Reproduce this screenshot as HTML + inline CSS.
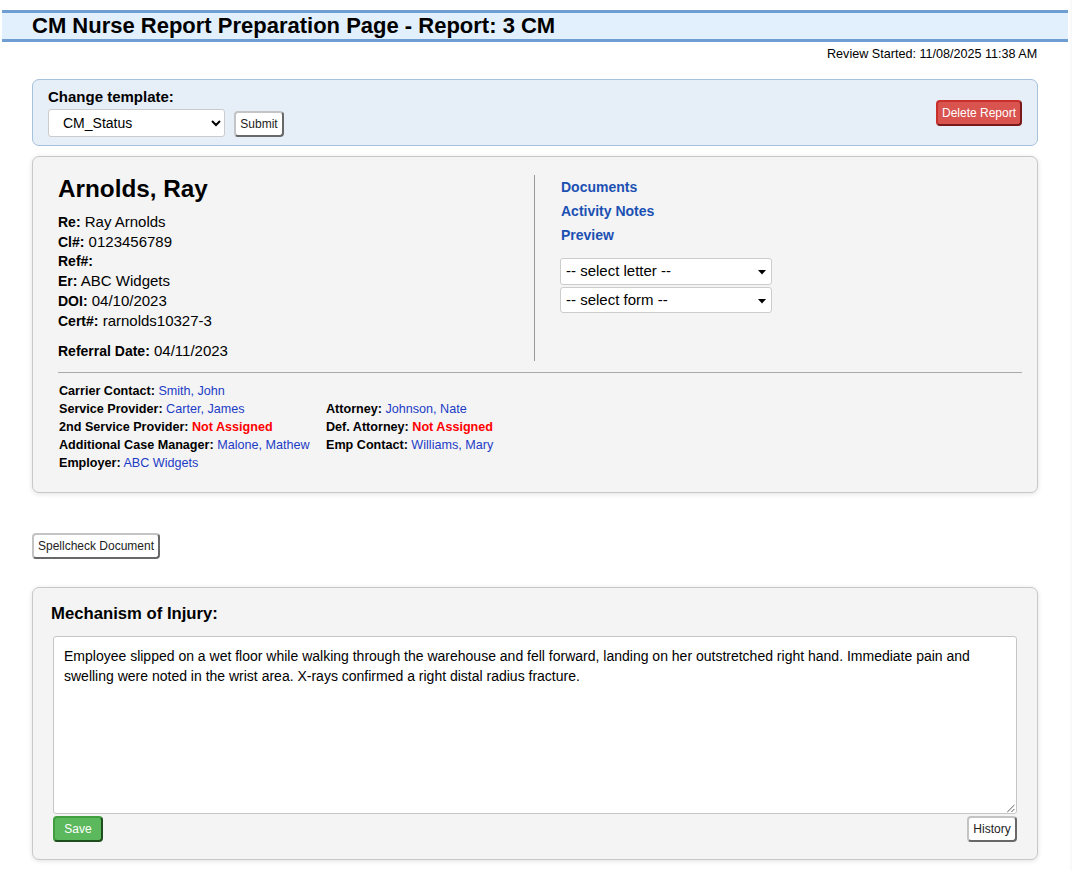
<!DOCTYPE html>
<html><head><meta charset="utf-8">
<style>
*{box-sizing:border-box}
html,body{margin:0;padding:0;background:#fff}
body{font-family:"Liberation Sans",sans-serif;color:#000;width:1072px;height:871px;overflow:hidden;position:relative}
.abs{position:absolute;white-space:nowrap}
.hdr{left:2px;top:10px;width:1066px;height:32px;background:#e2effc;border-top:3px solid #6f9fd2;border-bottom:3px solid #6f9fd2}
.hdr h1{margin:0;position:absolute;left:30px;top:-0.5px;font-size:22px;font-weight:bold;white-space:nowrap}
.rev{left:827px;top:47px;font-size:12.6px}
.tbox{left:32px;top:79px;width:1006px;height:67px;background:#e6eef7;border:1px solid #a5c1dc;border-radius:7px}
.btn{position:absolute;background:#fff;border:2px solid;border-color:#c4c4c4 #686868 #686868 #c4c4c4;border-radius:4px;font-size:12px;font-family:"Liberation Sans",sans-serif;text-align:center;color:#222;white-space:nowrap}
.sel{position:absolute;background:#fff;border:1px solid #ccc;border-radius:3px;font-size:14px;white-space:nowrap}
.pbox{left:32px;top:156px;width:1006px;height:337px;background:#f4f4f4;border:1px solid #c8c8c8;border-radius:7px;box-shadow:0 1px 5px rgba(0,0,0,.12)}
.mbox{left:32px;top:587px;width:1006px;height:273px;background:#f4f4f4;border:1px solid #c8c8c8;border-radius:7px;box-shadow:0 1px 5px rgba(0,0,0,.12)}
.lk{position:absolute;left:528px;color:#1b50b3;font-weight:bold;font-size:14px;white-space:nowrap}
.inf{position:absolute;left:25px;font-size:15px;white-space:nowrap}
.inf b{font-weight:bold;font-size:14px}
.ct{position:absolute;font-size:12.6px;white-space:nowrap}
.bl{color:#1c3cc6}
.rd{color:#ff0000;font-weight:bold}
</style></head><body>
<div class="abs hdr"><h1>CM Nurse Report Preparation Page - Report: 3 CM</h1></div>
<div class="abs" style="left:1070px;top:0;width:2px;height:871px;background:#f9f9f9"></div>
<div class="abs rev">Review Started: 11/08/2025 11:38 AM</div>

<div class="abs tbox">
  <div class="abs" style="left:15px;top:8px;font-size:15px;font-weight:bold">Change template:</div>
  <div class="sel" style="left:15px;top:29px;width:177px;height:28px;padding:5px 0 0 14px">CM_Status
    <svg style="position:absolute;left:162px;top:10px" width="11" height="7" viewBox="0 0 11 7"><path d="M1 1 L5 5 L9 1" fill="none" stroke="#000" stroke-width="2"/></svg>
  </div>
  <div class="btn" style="left:201px;top:31px;width:50px;height:26px;line-height:22px">Submit</div>
  <div class="abs" style="left:903px;top:20px;width:86px;height:26px;background:#d9534f;border:2px solid;border-color:#c9302c #7a1a1a #7a1a1a #c9302c;border-radius:4px;color:#fff;font-size:12px;text-align:center;line-height:22px">Delete Report</div>
</div>

<div class="abs pbox">
  <div class="abs" style="left:25px;top:18px;font-size:24.3px;font-weight:bold">Arnolds, Ray</div>
  <div class="inf" style="top:56px"><b>Re:</b> Ray Arnolds</div>
  <div class="inf" style="top:76px"><b>Cl#:</b> 0123456789</div>
  <div class="inf" style="top:95px"><b>Ref#:</b></div>
  <div class="inf" style="top:115px"><b>Er:</b> ABC Widgets</div>
  <div class="inf" style="top:135px"><b>DOI:</b> 04/10/2023</div>
  <div class="inf" style="top:155px"><b>Cert#:</b> rarnolds10327-3</div>
  <div class="inf" style="top:185px"><b>Referral Date:</b> 04/11/2023</div>
  <div class="abs" style="left:501px;top:18px;width:1px;height:186px;background:#999"></div>
  <div class="lk" style="top:22px">Documents</div>
  <div class="lk" style="top:46px">Activity Notes</div>
  <div class="lk" style="top:70px">Preview</div>
  <div class="sel" style="left:527px;top:101px;width:212px;height:27px;padding:3px 0 0 5px;font-size:15px">-- select letter --
    <svg style="position:absolute;left:197px;top:11px" width="8" height="5" viewBox="0 0 8 5"><path d="M0 0 L8 0 L4 4.5 Z" fill="#000"/></svg>
  </div>
  <div class="sel" style="left:527px;top:130px;width:212px;height:26px;padding:3px 0 0 5px;font-size:15px">-- select form --
    <svg style="position:absolute;left:197px;top:11px" width="8" height="5" viewBox="0 0 8 5"><path d="M0 0 L8 0 L4 4.5 Z" fill="#000"/></svg>
  </div>
  <div class="abs" style="left:25px;top:215px;width:964px;height:1px;background:#aaa"></div>
  <div class="ct" style="left:26px;top:227px"><b>Carrier Contact:</b> <span class="bl">Smith, John</span></div>
  <div class="ct" style="left:26px;top:245px"><b>Service Provider:</b> <span class="bl">Carter, James</span></div>
  <div class="ct" style="left:26px;top:263px"><b>2nd Service Provider:</b> <span class="rd">Not Assigned</span></div>
  <div class="ct" style="left:26px;top:281px"><b>Additional Case Manager:</b> <span class="bl">Malone, Mathew</span></div>
  <div class="ct" style="left:26px;top:299px"><b>Employer:</b> <span class="bl">ABC Widgets</span></div>
  <div class="ct" style="left:293px;top:245px"><b>Attorney:</b> <span class="bl">Johnson, Nate</span></div>
  <div class="ct" style="left:293px;top:263px"><b>Def. Attorney:</b> <span class="rd">Not Assigned</span></div>
  <div class="ct" style="left:293px;top:281px"><b>Emp Contact:</b> <span class="bl">Williams, Mary</span></div>
</div>

<div class="btn" style="left:32px;top:533px;width:128px;height:26px;line-height:22px">Spellcheck Document</div>

<div class="abs mbox">
  <div class="abs" style="left:18px;top:16px;font-size:16.7px;font-weight:bold">Mechanism of Injury:</div>
  <div class="abs" style="left:20px;top:48px;width:964px;height:178px;background:#fff;border:1px solid #c6c6c6;border-radius:3px;white-space:normal;padding:9px 10px;font-size:14px;line-height:20px">Employee slipped on a wet floor while walking through the warehouse and fell forward, landing on her outstretched right hand. Immediate pain and swelling were noted in the wrist area. X-rays confirmed a right distal radius fracture.
      </div>
  <div class="abs" style="left:20px;top:228px;width:50px;height:26px;background:#5cb85c;border:2px solid;border-color:#3f9f3f #1e4d1e #1e4d1e #3f9f3f;border-radius:4px;color:#fff;font-size:12px;text-align:center;line-height:22px">Save</div>
  <div class="btn" style="left:934px;top:228px;width:50px;height:26px;line-height:22px">History</div>
</div>
<svg style="position:absolute;left:1004px;top:802px" width="12" height="12" viewBox="0 0 12 12"><path d="M3.3 10 L10.4 3 M7.4 10 L10.4 7" stroke="#4a4a4a" stroke-width="0.9" fill="none"/></svg>
</body></html>
